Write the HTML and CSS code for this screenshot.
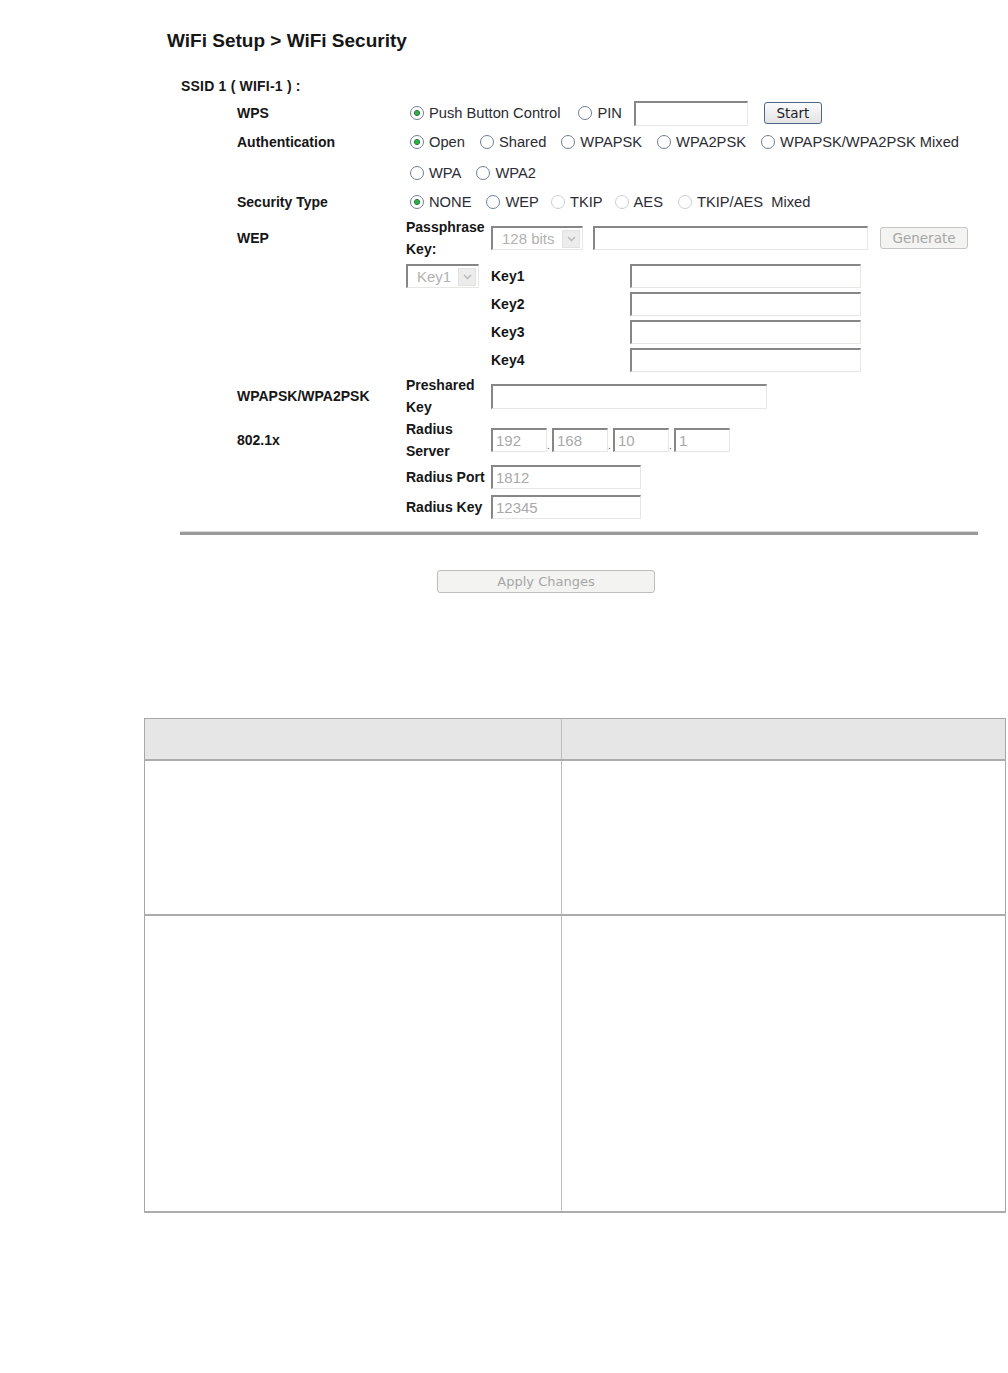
FILE: index.html
```html
<!DOCTYPE html>
<html lang="en">
<head>
  <meta charset="utf-8">
  <link rel="stylesheet" href="styles.css">
</head>
<body>
  <div class="page">
    <h1 class="title">WiFi Setup &gt; WiFi Security</h1>
    <div class="ssid">SSID 1 ( WIFI-1 ) :</div>

    <div class="form">
      <div class="row row-wps">
        <div class="lbl">WPS</div>
        <div class="opts">
          <label class="opt opt-wide"><input type="radio" name="wps" checked>Push Button Control</label>
          <label class="opt opt-pin"><input type="radio" name="wps">PIN</label>
          <input class="txt w-pin" type="text">
          <button class="btn btn-start">Start</button>
        </div>
      </div>

      <div class="row row-auth">
        <div class="lbl">Authentication</div>
        <div class="opts">
          <label class="opt"><input type="radio" name="auth" checked>Open</label>
          <label class="opt"><input type="radio" name="auth">Shared</label>
          <label class="opt"><input type="radio" name="auth">WPAPSK</label>
          <label class="opt"><input type="radio" name="auth">WPA2PSK</label>
          <label class="opt"><input type="radio" name="auth">WPAPSK/WPA2PSK Mixed</label>
        </div>
      </div>
      <div class="row row-auth2">
        <div class="lbl"></div>
        <div class="opts">
          <label class="opt"><input type="radio" name="auth">WPA</label>
          <label class="opt"><input type="radio" name="auth">WPA2</label>
        </div>
      </div>

      <div class="row row-sec">
        <div class="lbl">Security Type</div>
        <div class="opts">
          <label class="opt"><input type="radio" name="sec" checked>NONE</label>
          <label class="opt opt-tight"><input type="radio" name="sec">WEP</label>
          <label class="opt opt-tight"><input type="radio" name="sec" disabled>TKIP</label>
          <label class="opt"><input type="radio" name="sec" disabled>AES</label>
          <label class="opt"><input type="radio" name="sec" disabled>TKIP/AES&nbsp; Mixed</label>
        </div>
      </div>

      <!-- WEP -->
      <div class="row block">
        <div class="lbl lbl-tall">WEP</div>
        <div class="val">
          <div class="sub sub-2l">
            <div class="sublbl">Passphrase Key:</div>
            <div class="sel sel-bits"><span>128 bits</span><span class="arr"><svg width="9" height="6" viewBox="0 0 9 6"><path d="M1 1l3.5 3.5L8 1" fill="none" stroke="#b9b9b9" stroke-width="1.5"/></svg></span></div>
            <input class="txt w-pass" type="text" disabled>
            <button class="btn btn-off btn-gen" disabled>Generate</button>
          </div>
          <div class="keys">
            <div class="sub sub-key">
              <div class="sublbl">
                <div class="sel sel-key"><span>Key1</span><span class="arr"><svg width="9" height="6" viewBox="0 0 9 6"><path d="M1 1l3.5 3.5L8 1" fill="none" stroke="#b9b9b9" stroke-width="1.5"/></svg></span></div>
              </div>
              <div class="kname">Key1</div>
              <input class="txt w-key" type="text" disabled>
            </div>
            <div class="sub sub-key">
              <div class="sublbl"></div>
              <div class="kname">Key2</div>
              <input class="txt w-key" type="text" disabled>
            </div>
            <div class="sub sub-key">
              <div class="sublbl"></div>
              <div class="kname">Key3</div>
              <input class="txt w-key" type="text" disabled>
            </div>
            <div class="sub sub-key">
              <div class="sublbl"></div>
              <div class="kname">Key4</div>
              <input class="txt w-key" type="text" disabled>
            </div>
          </div>
        </div>
      </div>

      <!-- WPA PSK -->
      <div class="row block">
        <div class="lbl lbl-tall">WPAPSK/WPA2PSK</div>
        <div class="val">
          <div class="sub sub-2l">
            <div class="sublbl">Preshared Key</div>
            <input class="txt w-psk" type="text" disabled>
          </div>
        </div>
      </div>

      <!-- 802.1x -->
      <div class="row block">
        <div class="lbl lbl-tall">802.1x</div>
        <div class="val">
          <div class="sub sub-2l">
            <div class="sublbl">Radius Server</div>
            <div class="ip">
              <input class="txt w-ip" type="text" value="192" disabled>
              <span class="dot">.</span>
              <input class="txt w-ip" type="text" value="168" disabled>
              <span class="dot">.</span>
              <input class="txt w-ip" type="text" value="10" disabled>
              <span class="dot">.</span>
              <input class="txt w-ip" type="text" value="1" disabled>
            </div>
          </div>
          <div class="sub sub-1l">
            <div class="sublbl">Radius Port</div>
            <input class="txt w-port" type="text" value="1812" disabled>
          </div>
          <div class="sub sub-1l">
            <div class="sublbl">Radius Key</div>
            <input class="txt w-port" type="text" value="12345" disabled>
          </div>
        </div>
      </div>
    </div>

    <div class="rule"></div>

    <div class="apply-wrap">
      <button class="btn btn-off btn-apply" disabled>Apply Changes</button>
    </div>

    <table class="blank">
      <tr class="head"><td></td><td></td></tr>
      <tr class="r1"><td></td><td></td></tr>
      <tr class="r2"><td></td><td></td></tr>
    </table>
  </div>
</body>
</html>
```

FILE: styles.css
```css
* {
  box-sizing: border-box;
}

body {
  margin: 0;
  font-family: "Liberation Sans", Arial, sans-serif;
  color: #161616;
  background: #ffffff;
}

.page {
  padding-top: 30px;
  padding-bottom: 40px;
}

.title {
  margin: 0 0 0 167px;
  font-size: 19px;
  line-height: 22px;
  font-weight: bold;
}

.ssid {
  margin: 22px 0 0 181px;
  height: 25px;
  line-height: 25px;
  font-size: 14px;
  font-weight: bold;
  letter-spacing: 0.2px;
}

/* form rows */

.form {
  margin-left: 237px;
  font-size: 14px;
}

.row {
  display: flex;
  align-items: center;
}

.row-wps { height: 28px; }
.row-auth { height: 30px; }
.row-auth2 { height: 31px; }
.row-sec { height: 28px; }

.row.block {
  align-items: flex-start;
}

.lbl {
  width: 169px;
  flex-shrink: 0;
  font-weight: bold;
}

.lbl-tall {
  line-height: 44px;
}

.opts {
  display: flex;
  align-items: center;
  padding-left: 4px;
}

.opt {
  display: inline-flex;
  align-items: center;
  margin-right: 15px;
  font-size: 14.7px;
  color: #2b2b33;
}

.opt-wide { margin-right: 18px; }
.opt-pin { margin-right: 12px; }
.opt-tight { margin-right: 12px; }

.opt input {
  appearance: none;
  -webkit-appearance: none;
  width: 14px;
  height: 14px;
  margin: 0 5px 0 0;
  border: 1px solid #6f8196;
  border-radius: 50%;
  background: #ffffff;
}

.opt input:checked {
  background: radial-gradient(circle, #27b33f 0, #27b33f 2px, #3c6e48 2.6px, #ffffff 3.4px);
}

.opt input:disabled {
  border-color: #c9cfd6;
}

/* sub rows */

.val {
  display: flex;
  flex-direction: column;
}

.sub {
  display: flex;
  align-items: center;
}

.sub-2l { height: 44px; }
.sub-1l { height: 30px; }
.sub-key { height: 28px; }

.keys {
  margin-top: 2px;
}

.sublbl {
  width: 85px;
  flex-shrink: 0;
  font-weight: bold;
  line-height: 22px;
}

.kname {
  width: 139px;
  flex-shrink: 0;
  font-weight: bold;
}

/* fields */

.txt {
  height: 24px;
  padding: 0 3px;
  border: 1px solid #e6e6e2;
  border-top: 2px solid #868686;
  border-left: 2px solid #868686;
  background: #ffffff;
  font-family: "Liberation Sans", Arial, sans-serif;
  font-size: 15px;
  color: #a9a9a9;
  outline: none;
}

.txt:disabled {
  background: #ffffff;
  color: #a9a9a9;
}

.w-pin { width: 114px; height: 25px; }
.w-pass { width: 275px; margin-left: 10px; }
.w-key { width: 231px; }
.w-psk { width: 276px; height: 25px; }
.w-ip { width: 56px; }
.w-port { width: 150px; }

.ip {
  display: flex;
  align-items: center;
}

.dot {
  width: 5px;
  font-size: 10px;
  color: #6a4c8a;
  align-self: flex-end;
  line-height: 12px;
}

.sel {
  display: inline-flex;
  align-items: center;
  justify-content: space-between;
  height: 24px;
  padding: 0 2px 0 9px;
  border: 1px solid #e6e6e2;
  border-top: 2px solid #868686;
  border-left: 2px solid #868686;
  font-size: 15px;
  font-weight: normal;
  color: #b2b2b2;
}

.sel-bits { width: 92px; }
.sel-key { width: 73px; }

.arr {
  display: flex;
  align-items: center;
  justify-content: center;
  width: 18px;
  height: 18px;
  background: #ececec;
  border: 1px solid #e2e2e2;
}

/* buttons */

.btn {
  height: 22px;
  padding: 0;
  border-radius: 3px;
  font-family: "DejaVu Sans", Verdana, sans-serif;
  font-size: 13.5px;
}

.btn-start {
  width: 58px;
  margin-left: 16px;
  border: 1px solid #4f6784;
  background: linear-gradient(#fbfbfb, #e3e3e3);
  color: #1c1c2c;
}

.btn-off {
  border: 1px solid #c4c4c4;
  background: #f3f3f1;
  color: #a6a6a6;
}

.btn-gen {
  width: 88px;
  margin-left: 12px;
}

.rule {
  margin: 9px 0 0 180px;
  width: 798px;
  height: 4px;
  border-top: 1px solid #dadada;
  background: #9a9a9a;
}

.apply-wrap {
  margin: 35px 0 0 437px;
}

.btn-apply {
  width: 218px;
  height: 23px;
  font-size: 13px;
  border-color: #bdbdbd;
}

/* empty table */

.blank {
  margin: 125px 0 0 144px;
  width: 862px;
  border-collapse: collapse;
  border: 1px solid #a7a7a7;
}

.blank td {
  padding: 0;
  border-left: 1px solid #bdbdbd;
}

.blank td:first-child {
  width: 417px;
  border-left: none;
}

.blank tr {
  border-bottom: 2px solid #acacac;
}

.blank .head td {
  height: 41px;
  background: #e6e6e6;
}

.blank .r1 td { height: 155px; }
.blank .r2 td { height: 297px; }
```
